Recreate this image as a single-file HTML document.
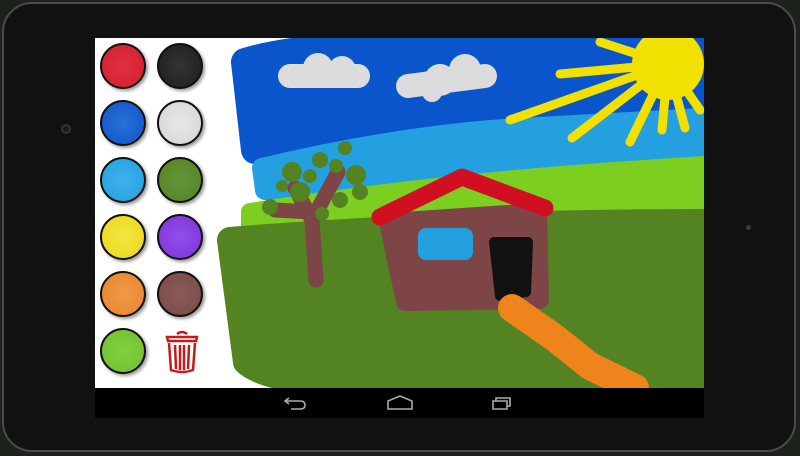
<!DOCTYPE html>
<html><head><meta charset="utf-8"><style>
html,body{margin:0;padding:0;width:800px;height:456px;overflow:hidden;background:#1c211c;}
.dev{position:absolute;left:2px;top:2px;width:794px;height:450px;border-radius:30px;background:#111;border:2px solid #4a4a4a;box-sizing:border-box;}
.screen{position:absolute;left:95px;top:38px;width:609px;height:350px;background:#fff;overflow:hidden;}
.nav{position:absolute;left:95px;top:388px;width:609px;height:30px;background:#000;}
.b{position:absolute;width:46px;height:46px;border-radius:50%;border:2px solid #111;box-sizing:border-box;box-shadow:2px 2px 3px rgba(0,0,0,.4);}
</style></head><body>
<div class="dev"></div>
<div style="position:absolute;left:61px;top:124px;width:10px;height:10px;border-radius:50%;border:2px solid #333;background:#1a1a2a;box-sizing:border-box"></div>
<div style="position:absolute;left:746px;top:225px;width:5px;height:5px;border-radius:50%;background:#3a3a3a"></div>
<div class="screen">
<svg width="609" height="350" viewBox="95 38 609 350" style="position:absolute;left:0;top:0">
<g stroke-linecap="round" stroke-linejoin="round" fill="none">
<path d="M245 62 Q300 45 420 44 L704 40 L704 135 L420 140 L255 150 Z" fill="#0a55cc" stroke="#0a55cc" stroke-width="28"/>
<path d="M262 168 Q400 135 520 128 L704 118 L704 170 L520 180 L265 190 Z" fill="#24a0e0" stroke="#24a0e0" stroke-width="20"/>
<path d="M250 212 Q420 185 600 172 L704 165 L704 235 L250 235 Z" fill="#7ccf20" stroke="#7ccf20" stroke-width="18"/>
<path d="M230 240 Q450 222 704 222 L704 388 L400 388 Q270 385 246 362 Z" fill="#548322" stroke="#548322" stroke-width="26"/>
<!-- clouds -->
<path d="M290 76 L358 76" stroke="#dcdcdc" stroke-width="24"/>
<g fill="#dcdcdc"><circle cx="318" cy="68" r="15"/><circle cx="342" cy="70" r="14"/></g>
<path d="M408 86 L485 76" stroke="#dcdcdc" stroke-width="24"/>
<g fill="#dcdcdc"><circle cx="440" cy="80" r="16"/><circle cx="465" cy="70" r="16"/><circle cx="432" cy="92" r="10"/></g>
<circle cx="668" cy="64" r="36" fill="#f2e000"/>
<g stroke="#f2e000" stroke-width="9">
<path d="M668 64 L600 42"/><path d="M668 64 L560 74"/><path d="M668 64 L510 120"/><path d="M668 64 L572 138"/><path d="M668 64 L630 142"/><path d="M668 64 L662 130"/><path d="M668 64 L685 128"/><path d="M668 64 L700 110"/>
</g>
<g stroke="#7d4545" stroke-width="15"><path d="M316 280 L312 220 L295 188"/><path d="M312 220 L338 172"/><path d="M312 212 L275 210"/></g>
<g fill="#548322"><circle cx="292" cy="172" r="10"/><circle cx="320" cy="160" r="8"/><circle cx="345" cy="148" r="7"/><circle cx="356" cy="175" r="10"/><circle cx="360" cy="192" r="8"/><circle cx="300" cy="192" r="10"/><circle cx="270" cy="207" r="8"/><circle cx="340" cy="200" r="8"/><circle cx="322" cy="214" r="7"/><circle cx="336" cy="166" r="7"/><circle cx="310" cy="176" r="7"/><circle cx="282" cy="186" r="6"/></g>
<path d="M388 222 L538 212 L540 300 L405 302 Z" fill="#7d4545" stroke="#7d4545" stroke-width="18"/>
<path d="M380 217 L462 177 L545 208" stroke="#d01020" stroke-width="17"/>
<rect x="418" y="228" width="55" height="32" rx="8" fill="#24a0e0"/>
<path d="M494 242 L528 242 L526 292 L500 296 Z" fill="#111" stroke="#111" stroke-width="10"/>
<path d="M512 308 L555 338 L590 366 L635 388" stroke="#f0841c" stroke-width="28"/>
</g>
</svg>
<div class="b" style="left:5px;top:5px;background:radial-gradient(#e03040,#d21f30)"></div>
<div class="b" style="left:62px;top:5px;background:radial-gradient(#333,#1e1e1e)"></div>
<div class="b" style="left:5px;top:62px;background:radial-gradient(#2a70d8,#0d55c8)"></div>
<div class="b" style="left:62px;top:62px;background:radial-gradient(#e8e8e8,#d4d4d4)"></div>
<div class="b" style="left:5px;top:119px;background:radial-gradient(#40b0ec,#24a0e0)"></div>
<div class="b" style="left:62px;top:119px;background:radial-gradient(#649438,#548322)"></div>
<div class="b" style="left:5px;top:176px;background:radial-gradient(#f2e640,#ecd81c)"></div>
<div class="b" style="left:62px;top:176px;background:radial-gradient(#9050e8,#7f30dc)"></div>
<div class="b" style="left:5px;top:233px;background:radial-gradient(#f09848,#e8852c)"></div>
<div class="b" style="left:62px;top:233px;background:radial-gradient(#8a5a58,#7a4a48)"></div>
<div class="b" style="left:5px;top:290px;background:radial-gradient(#80d040,#70c030)"></div>
<svg style="position:absolute;left:68px;top:290px" width="38" height="48" viewBox="0 0 38 48">
<g fill="none" stroke="#c41a1a" stroke-width="2.5">
<path d="M14 6 Q19 2 24 6"/><path d="M4 9 L34 9 L33 13 L5 13 Z"/>
<path d="M6 15 L8 42 Q19 46 30 42 L32 15"/>
<path d="M12 17 L13 41 M17 17 L17 42 M21 17 L21 42 M26 17 L25 41"/>
</g></svg>
</div>
<div class="nav">
<svg width="609" height="30" style="position:absolute;left:0;top:0">
<g fill="none" stroke="#aaa" stroke-width="1.6">
<path d="M194 10 L190 13 L194 16 M190 13 L205 13 Q210 13 210 17 Q210 21 205 21 L196 21"/>
<path d="M293 13 L305 8 L317 13 L317 21 L293 21 Z"/>
<path d="M398 13 L412 13 L412 21 L398 21 Z M401 13 L401 10 L415 10 L415 18 L412 18"/>
</g></svg>
</div>
</body></html>
